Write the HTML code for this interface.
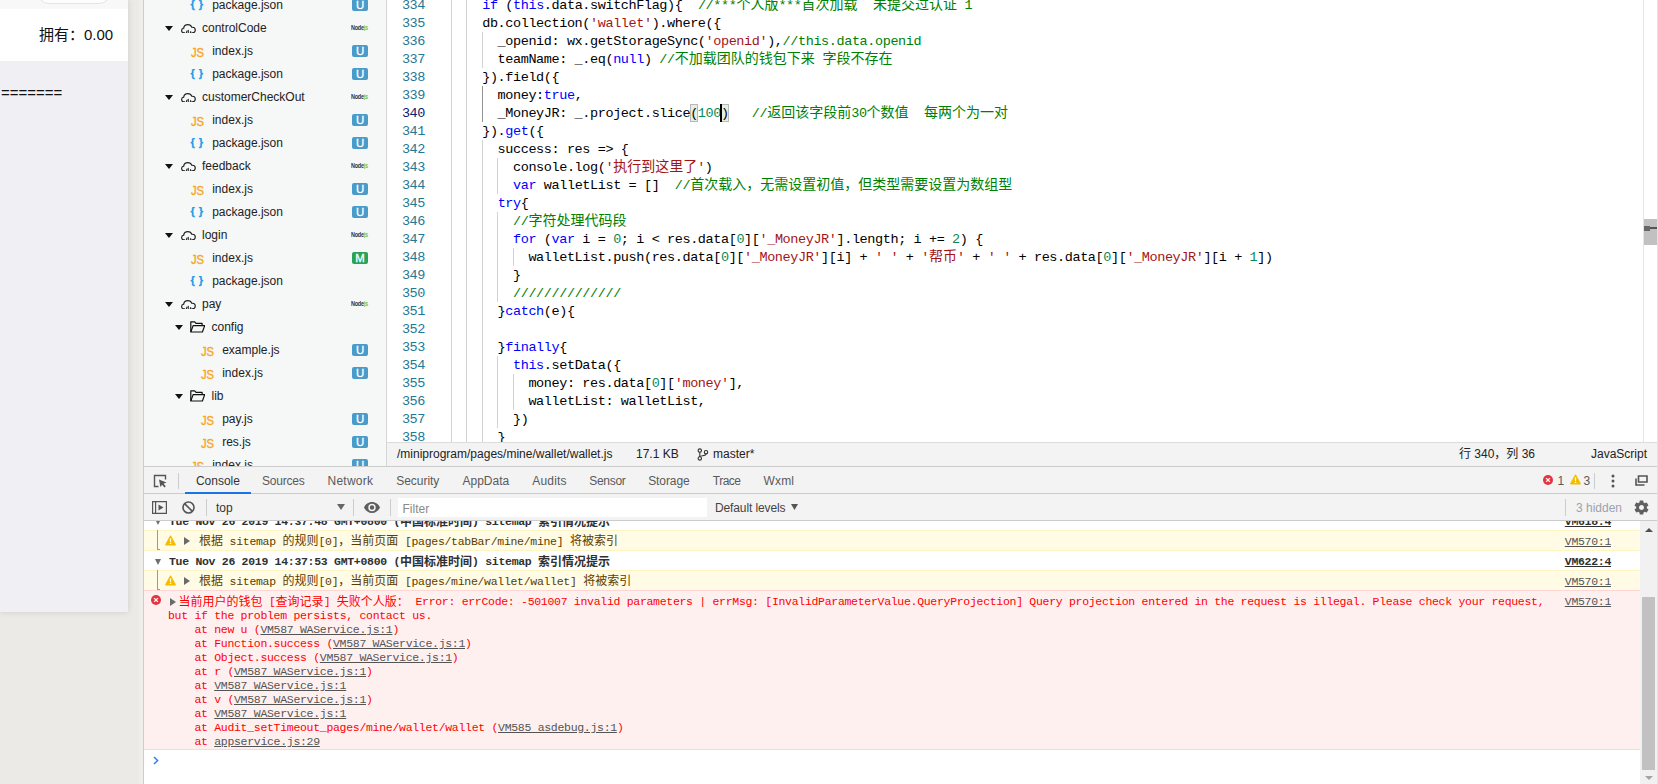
<!DOCTYPE html>
<html lang="zh-CN">
<head>
<meta charset="utf-8">
<title>WeChat DevTools</title>
<style>
*{box-sizing:border-box;margin:0;padding:0}
html,body{width:1658px;height:784px;overflow:hidden}
body{background:#ebeae6;font-family:"Liberation Sans","Noto Sans CJK SC",sans-serif;font-size:12px;color:#222;position:relative}
i{font-style:normal}
u{text-decoration:underline}

/* ---------- simulator ---------- */
#sim{position:absolute;left:0;top:0;width:128px;height:612px;background:#efeff4;box-shadow:0 0 6px rgba(0,0,0,.13);overflow:hidden}
#sim .top{position:absolute;left:0;top:0;width:128px;height:9px;background:#f8f8f8}
#sim .pill{position:absolute;left:37px;top:-20.500px;width:74px;height:24px;border:1px solid #e4e4e4;border-radius:12px;background:#fdfdfd}
#sim .own{position:absolute;left:0;top:9px;width:128px;height:52px;background:#fff}
#sim .own span{position:absolute;left:39px;top:14.500px;font-size:15px;line-height:22px;color:#111;white-space:nowrap}
#sim .eq{position:absolute;left:1px;top:82px;font-size:15px;line-height:22px;color:#111;white-space:nowrap}
#gap{position:absolute;left:139px;top:0;width:5px;height:784px;background:#efeeea;border-right:1px solid #cdcdcf}

#redge{position:absolute;left:1657px;top:0;width:1px;height:784px;background:#e2e2e2;z-index:9}
/* ---------- file tree ---------- */
#tree{position:absolute;left:144px;top:0;width:243px;height:466px;background:#f6f7f7;border-right:1px solid #d6d6d6;overflow:hidden}
.tr{position:absolute;left:0;width:242px;height:23px;line-height:23px;white-space:nowrap}
.tr .ar{position:absolute;top:10px;width:0;height:0;border-left:4px solid transparent;border-right:4px solid transparent;border-top:5px solid #111}
.tr .ic{position:absolute;top:6px}
.tr .nm{position:absolute;top:1px;font-size:12px;color:#222}
.tr .js{position:absolute;top:2.500px;font-size:12.500px;color:#f5a623;letter-spacing:-.2px;transform:scaleX(.9);transform-origin:0 50%;-webkit-text-stroke:.35px #f5a623}
.tr .jn{position:absolute;top:-.5px;font-size:11px;color:#1a9ce6;font-weight:bold;letter-spacing:.5px;-webkit-text-stroke:.25px #1a9ce6;white-space:pre}
.tr .bd{position:absolute;left:208px;top:6px;width:16px;height:12px;border-radius:2px;color:#fff;font-size:11.400px;font-weight:normal;line-height:12.500px;text-align:center;-webkit-text-stroke:.3px #fff}
.bd.u{background:#4a9bc9}
.bd.m{background:#27a45c}
.tr .nd{position:absolute;left:207px;top:0;width:17px;font-size:5.5px;font-weight:bold;color:#333;letter-spacing:-.25px;text-align:left;transform:scaleY(1.35)}
.tr .nd b{color:#6cc24a}

/* ---------- editor ---------- */
#ed{position:absolute;left:387px;top:0;width:1271px;height:442px;background:#fff;overflow:hidden;font-family:"Liberation Mono","Noto Sans CJK SC",monospace;font-size:13.5px;letter-spacing:-.4px}
.ln{position:absolute;left:0;width:38px;height:18px;line-height:18px;text-align:right;color:#237893;white-space:pre}
.ln.cur{color:#0b216f}
.cl{position:absolute;left:49px;height:18px;line-height:18px;white-space:pre;color:#000}
.cl .z{font-family:"Noto Sans CJK SC",sans-serif;font-size:14px;letter-spacing:0;font-weight:400;line-height:0}
.k{color:#0000ff}.s{color:#a31515}.n{color:#09885a}.c{color:#008000}
.ig{position:absolute;width:1px;background:#d3d3d3}
.ig.act{background:#939393}
#cursor{position:absolute;left:333px;top:104px;width:2px;height:18px;background:#000}
.bm{position:absolute;top:104px;width:7.5px;height:18px;border:1px solid #b9b9b9;background:rgba(0,100,0,.1)}
#vsb{position:absolute;left:1256px;top:0;width:14px;height:442px;border-left:1px solid #e4e4e4}
#vsb .th{position:absolute;left:0;top:219px;width:14px;height:26px;background:#c1c1c1}
#vsb .mk{position:absolute;left:0;top:227px;width:14px;height:2px;background:#555}
#vsb .mk2{position:absolute;left:0;top:226px;width:6px;height:5px;background:#666}

/* ---------- status bar ---------- */
#st{position:absolute;left:387px;top:442px;width:1271px;height:24px;background:#f3f3f3;border-top:1px solid #dcdcdc;font-size:12px;line-height:22px;color:#222;white-space:nowrap}
#st span{position:absolute;top:0}

/* ---------- devtools ---------- */
#dt{position:absolute;left:144px;top:466px;width:1514px;height:318px;background:#fff;font-size:12px}
#tbar{position:absolute;left:0;top:0;width:1514px;height:28px;background:#f3f3f3;border-top:1px solid #ccc;border-bottom:1px solid #ccc}
.tb{position:absolute;top:1px;height:26px;line-height:27px;color:#5a5a5a;white-space:nowrap}
.tb.on{color:#333}
#ul{position:absolute;left:41px;top:25px;width:66px;height:2px;background:#1a73e8}
.sep{position:absolute;width:1px;background:#ccc}
#cbar{position:absolute;left:0;top:28px;width:1514px;height:27px;background:#f3f3f3;border-bottom:1px solid #ccc}
#flt{position:absolute;left:254px;top:4px;width:309px;height:19px;background:#fff;color:#8a8a8a;line-height:22px;padding-left:4.500px;letter-spacing:0}
#cbar span{position:absolute;white-space:nowrap}
#cons{position:absolute;left:0;top:55px;width:1496px;height:263px;overflow:hidden;font-family:"Liberation Mono","Noto Serif CJK SC",monospace;font-size:11.5px;letter-spacing:-.3px;line-height:14px}
.zc{font-family:"Noto Sans CJK SC",sans-serif;font-size:12px;line-height:0;letter-spacing:0;font-weight:400;position:relative;top:.5px}
.row{position:absolute;left:0;width:1496px;height:20px;white-space:pre}
.row.wr{height:21px;background:#fffbe5;border-top:1px solid #fff5c2;border-bottom:1px solid #fff5c2;color:#5c3c00}
.row.grp{font-weight:bold;color:#303030}
.row.grp .zc{font-weight:700}
.row .gt{position:absolute;left:25px;top:4px}
.row .wt{position:absolute;left:55px;top:3.500px}
.row .ga{position:absolute;left:11px;top:8px;width:0;height:0;border-left:3.5px solid transparent;border-right:3.5px solid transparent;border-top:6px solid #6e6e6e}
.row .gl{position:absolute;left:13px;top:-1px;width:3px;height:20px;border-left:1px solid #9a9a9a;border-bottom:1px solid #9a9a9a}
.row .wi{position:absolute;left:20.500px;top:3.500px}
.ex{position:absolute;left:40px;top:5.500px;width:0;height:0;border-top:4px solid transparent;border-bottom:4px solid transparent;border-left:6.500px solid #6a6a6a}
.lk{position:absolute;right:29px;top:4px;color:#545454;font-weight:normal}
.lk.b{color:#303030;font-weight:bold}
.er{position:absolute;left:0;width:1496px;height:160px;background:#fff0f0;border-top:1px solid #ffd6d6;border-bottom:1px solid #ffd6d6;color:#ff0000;white-space:pre}
.er .ei{position:absolute;left:7px;top:4px}
.er .e2{left:26px;top:7px}
.er .et{position:absolute;left:24px;top:4px}
.er .e1{padding-left:10.4px}
.er .sl{padding-left:26.4px}
.er u{color:#545454}
.er .lk{top:4px}
.pr{position:absolute;left:9px;top:235px}
#csb{position:absolute;left:1496px;top:55px;width:18px;height:263px;background:#f1f1f1}
#csb .th{position:absolute;left:2px;top:76px;width:13px;height:173px;background:#c1c1c1}
#csb .up{position:absolute;left:4.500px;top:7px;width:0;height:0;border-left:4px solid transparent;border-right:4px solid transparent;border-bottom:4.500px solid #505050}
#csb .dn{position:absolute;left:4.500px;top:255px;width:0;height:0;border-left:4px solid transparent;border-right:4px solid transparent;border-top:4.500px solid #a3a3a3}
</style>
</head>
<body>

<div id="gap"></div>
<div id="redge"></div>

<div id="sim">
  <div class="top"><div class="pill"></div></div>
  <div class="own"><span>拥有：0.00</span></div>
  <div class="eq">=======</div>
</div>

<div id="tree">
<div class="tr" style="top:-7px"><span class="jn" style="left:46.5px">{ }</span><span class="nm" style="left:68.2px">package.json</span><span class="bd u">U</span></div>
<div class="tr" style="top:16px"><i class="ar" style="left:21px"></i><svg class="ic" style="left:37px;top:7.600px" width="15" height="9.700" viewBox="0 0 15 10" preserveAspectRatio="none"><path d="M3.700 9.200H3.300C1.800 9.200.6 8.100.6 6.700c0-1.200.9-2.200 2.100-2.400C2.900 2.300 4.700.6 6.900.6c1.800 0 3.300 1.100 3.900 2.700h.4c1.700 0 3.100 1.300 3.100 2.900 0 1.700-1.400 3-3.100 3h-.5" fill="none" stroke="#222" stroke-width="1.150" stroke-linecap="round"/><path d="M5.300 9.400l.7-2.200M7.300 9.400V6.400M9.200 9.400l.5-1.600" stroke="#222" stroke-width="1.050" fill="none" stroke-linecap="round"/></svg><span class="nm" style="left:58px">controlCode</span><span class="nd">Node<b>js</b></span></div>
<div class="tr" style="top:39px"><span class="js" style="left:46.5px">JS</span><span class="nm" style="left:68.2px">index.js</span><span class="bd u">U</span></div>
<div class="tr" style="top:62px"><span class="jn" style="left:46.5px">{ }</span><span class="nm" style="left:68.2px">package.json</span><span class="bd u">U</span></div>
<div class="tr" style="top:85px"><i class="ar" style="left:21px"></i><svg class="ic" style="left:37px;top:7.600px" width="15" height="9.700" viewBox="0 0 15 10" preserveAspectRatio="none"><path d="M3.700 9.200H3.300C1.800 9.200.6 8.100.6 6.700c0-1.200.9-2.200 2.100-2.400C2.900 2.300 4.700.6 6.900.6c1.800 0 3.300 1.100 3.900 2.700h.4c1.700 0 3.100 1.300 3.100 2.900 0 1.700-1.400 3-3.100 3h-.5" fill="none" stroke="#222" stroke-width="1.150" stroke-linecap="round"/><path d="M5.300 9.400l.7-2.200M7.300 9.400V6.400M9.200 9.400l.5-1.600" stroke="#222" stroke-width="1.050" fill="none" stroke-linecap="round"/></svg><span class="nm" style="left:58px">customerCheckOut</span><span class="nd">Node<b>js</b></span></div>
<div class="tr" style="top:108px"><span class="js" style="left:46.5px">JS</span><span class="nm" style="left:68.2px">index.js</span><span class="bd u">U</span></div>
<div class="tr" style="top:131px"><span class="jn" style="left:46.5px">{ }</span><span class="nm" style="left:68.2px">package.json</span><span class="bd u">U</span></div>
<div class="tr" style="top:154px"><i class="ar" style="left:21px"></i><svg class="ic" style="left:37px;top:7.600px" width="15" height="9.700" viewBox="0 0 15 10" preserveAspectRatio="none"><path d="M3.700 9.200H3.300C1.800 9.200.6 8.100.6 6.700c0-1.200.9-2.200 2.100-2.400C2.900 2.300 4.700.6 6.900.6c1.800 0 3.300 1.100 3.900 2.700h.4c1.700 0 3.100 1.300 3.100 2.900 0 1.700-1.400 3-3.100 3h-.5" fill="none" stroke="#222" stroke-width="1.150" stroke-linecap="round"/><path d="M5.300 9.400l.7-2.200M7.300 9.400V6.400M9.200 9.400l.5-1.600" stroke="#222" stroke-width="1.050" fill="none" stroke-linecap="round"/></svg><span class="nm" style="left:58px">feedback</span><span class="nd">Node<b>js</b></span></div>
<div class="tr" style="top:177px"><span class="js" style="left:46.5px">JS</span><span class="nm" style="left:68.2px">index.js</span><span class="bd u">U</span></div>
<div class="tr" style="top:200px"><span class="jn" style="left:46.5px">{ }</span><span class="nm" style="left:68.2px">package.json</span><span class="bd u">U</span></div>
<div class="tr" style="top:223px"><i class="ar" style="left:21px"></i><svg class="ic" style="left:37px;top:7.600px" width="15" height="9.700" viewBox="0 0 15 10" preserveAspectRatio="none"><path d="M3.700 9.200H3.300C1.800 9.200.6 8.100.6 6.700c0-1.200.9-2.200 2.100-2.400C2.900 2.300 4.700.6 6.900.6c1.800 0 3.300 1.100 3.900 2.700h.4c1.700 0 3.100 1.300 3.100 2.900 0 1.700-1.400 3-3.100 3h-.5" fill="none" stroke="#222" stroke-width="1.150" stroke-linecap="round"/><path d="M5.300 9.400l.7-2.200M7.300 9.400V6.400M9.200 9.400l.5-1.600" stroke="#222" stroke-width="1.050" fill="none" stroke-linecap="round"/></svg><span class="nm" style="left:58px">login</span><span class="nd">Node<b>js</b></span></div>
<div class="tr" style="top:246px"><span class="js" style="left:46.5px">JS</span><span class="nm" style="left:68.2px">index.js</span><span class="bd m">M</span></div>
<div class="tr" style="top:269px"><span class="jn" style="left:46.5px">{ }</span><span class="nm" style="left:68.2px">package.json</span></div>
<div class="tr" style="top:292px"><i class="ar" style="left:21px"></i><svg class="ic" style="left:37px;top:7.600px" width="15" height="9.700" viewBox="0 0 15 10" preserveAspectRatio="none"><path d="M3.700 9.200H3.300C1.800 9.200.6 8.100.6 6.700c0-1.200.9-2.200 2.100-2.400C2.900 2.300 4.700.6 6.900.6c1.800 0 3.300 1.100 3.900 2.700h.4c1.700 0 3.100 1.300 3.100 2.900 0 1.700-1.400 3-3.100 3h-.5" fill="none" stroke="#222" stroke-width="1.150" stroke-linecap="round"/><path d="M5.300 9.400l.7-2.200M7.300 9.400V6.400M9.200 9.400l.5-1.600" stroke="#222" stroke-width="1.050" fill="none" stroke-linecap="round"/></svg><span class="nm" style="left:58px">pay</span><span class="nd">Node<b>js</b></span></div>
<div class="tr" style="top:315px"><i class="ar" style="left:31px"></i><svg class="ic" style="left:45.5px;top:6.100px" width="15.500" height="12" viewBox="0 0 15.500 12"><path d="M.8 11V.8h3.900l1.300 1.500h6.100v2.100" fill="none" stroke="#111" stroke-width="1.200" stroke-linejoin="round"/><path d="M.8 11l2.300-6.400h11.600L12.400 11z" fill="none" stroke="#111" stroke-width="1.200" stroke-linejoin="round"/></svg><span class="nm" style="left:67.5px">config</span></div>
<div class="tr" style="top:338px"><span class="js" style="left:56.5px">JS</span><span class="nm" style="left:78.2px">example.js</span><span class="bd u">U</span></div>
<div class="tr" style="top:361px"><span class="js" style="left:56.5px">JS</span><span class="nm" style="left:78.2px">index.js</span><span class="bd u">U</span></div>
<div class="tr" style="top:384px"><i class="ar" style="left:31px"></i><svg class="ic" style="left:45.5px;top:6.100px" width="15.500" height="12" viewBox="0 0 15.500 12"><path d="M.8 11V.8h3.900l1.300 1.500h6.100v2.100" fill="none" stroke="#111" stroke-width="1.200" stroke-linejoin="round"/><path d="M.8 11l2.300-6.400h11.600L12.400 11z" fill="none" stroke="#111" stroke-width="1.200" stroke-linejoin="round"/></svg><span class="nm" style="left:67.5px">lib</span></div>
<div class="tr" style="top:407px"><span class="js" style="left:56.5px">JS</span><span class="nm" style="left:78.2px">pay.js</span><span class="bd u">U</span></div>
<div class="tr" style="top:430px"><span class="js" style="left:56.5px">JS</span><span class="nm" style="left:78.2px">res.js</span><span class="bd u">U</span></div>
<div class="tr" style="top:453px"><span class="js" style="left:46.5px">JS</span><span class="nm" style="left:68.2px">index.js</span><span class="bd u">U</span></div>
</div>

<div id="ed">
<div class="ln" style="top:-3px">334</div>
<div class="cl" style="top:-3px">      <span class="k">if</span> (<span class="k">this</span>.data.switchFlag){  <span class="c">//***<span class="z">个人版</span>***<span class="z">首次加载</span>  <span class="z">未提交过认证</span> 1</span></div>
<div class="ln" style="top:15px">335</div>
<div class="cl" style="top:15px">      db.collection(<span class="s">'wallet'</span>).where({</div>
<div class="ln" style="top:33px">336</div>
<div class="cl" style="top:33px">        _openid: wx.getStorageSync(<span class="s">'openid'</span>),<span class="c">//this.data.openid</span></div>
<div class="ln" style="top:51px">337</div>
<div class="cl" style="top:51px">        teamName: _.eq(<span class="k">null</span>) <span class="c">//<span class="z">不加载团队的钱包下来</span> <span class="z">字段不存在</span></span></div>
<div class="ln" style="top:69px">338</div>
<div class="cl" style="top:69px">      }).field({</div>
<div class="ln" style="top:87px">339</div>
<div class="cl" style="top:87px">        money:<span class="k">true</span>,</div>
<div class="ln cur" style="top:105px">340</div>
<div class="cl" style="top:105px">        _MoneyJR: _.project.slice(<span class="n">100</span>)   <span class="c">//<span class="z">返回该字段前</span>30<span class="z">个数值</span>  <span class="z">每两个为一对</span></span></div>
<div class="ln" style="top:123px">341</div>
<div class="cl" style="top:123px">      }).<span class="k">get</span>({</div>
<div class="ln" style="top:141px">342</div>
<div class="cl" style="top:141px">        success: res =&gt; {</div>
<div class="ln" style="top:159px">343</div>
<div class="cl" style="top:159px">          console.log(<span class="s">'<span class="z">执行到这里了</span>'</span>)</div>
<div class="ln" style="top:177px">344</div>
<div class="cl" style="top:177px">          <span class="k">var</span> walletList = []  <span class="c">//<span class="z">首次载入，无需设置初值，但类型需要设置为数组型</span></span></div>
<div class="ln" style="top:195px">345</div>
<div class="cl" style="top:195px">        <span class="k">try</span>{</div>
<div class="ln" style="top:213px">346</div>
<div class="cl" style="top:213px">          <span class="c">//<span class="z">字符处理代码段</span></span></div>
<div class="ln" style="top:231px">347</div>
<div class="cl" style="top:231px">          <span class="k">for</span> (<span class="k">var</span> i = <span class="n">0</span>; i &lt; res.data[<span class="n">0</span>][<span class="s">'_MoneyJR'</span>].length; i += <span class="n">2</span>) {</div>
<div class="ln" style="top:249px">348</div>
<div class="cl" style="top:249px">            walletList.push(res.data[<span class="n">0</span>][<span class="s">'_MoneyJR'</span>][i] + <span class="s">' '</span> + <span class="s">'<span class="z">帮币</span>'</span> + <span class="s">' '</span> + res.data[<span class="n">0</span>][<span class="s">'_MoneyJR'</span>][i + <span class="n">1</span>])</div>
<div class="ln" style="top:267px">349</div>
<div class="cl" style="top:267px">          }</div>
<div class="ln" style="top:285px">350</div>
<div class="cl" style="top:285px">          <span class="c">//////////////</span></div>
<div class="ln" style="top:303px">351</div>
<div class="cl" style="top:303px">        }<span class="k">catch</span>(e){</div>
<div class="ln" style="top:321px">352</div>
<div class="ln" style="top:339px">353</div>
<div class="cl" style="top:339px">        }<span class="k">finally</span>{</div>
<div class="ln" style="top:357px">354</div>
<div class="cl" style="top:357px">          <span class="k">this</span>.setData({</div>
<div class="ln" style="top:375px">355</div>
<div class="cl" style="top:375px">            money: res.data[<span class="n">0</span>][<span class="s">'money'</span>],</div>
<div class="ln" style="top:393px">356</div>
<div class="cl" style="top:393px">            walletList: walletList,</div>
<div class="ln" style="top:411px">357</div>
<div class="cl" style="top:411px">          })</div>
<div class="ln" style="top:429px">358</div>
<div class="cl" style="top:429px">        }</div>
<div class="ig" style="left:63.9px;top:-4px;height:450px"></div>
<div class="ig" style="left:79.3px;top:-4px;height:450px"></div>
<div class="ig" style="left:94.7px;top:32px;height:36px"></div>
<div class="ig act" style="left:94.7px;top:86px;height:36px"></div>
<div class="ig" style="left:94.7px;top:140px;height:306px"></div>
<div class="ig" style="left:110.1px;top:158px;height:36px"></div>
<div class="ig" style="left:110.1px;top:212px;height:90px"></div>
<div class="ig" style="left:110.1px;top:356px;height:72px"></div>
<div class="ig" style="left:125.5px;top:248px;height:18px"></div>
<div class="ig" style="left:125.5px;top:374px;height:36px"></div>
<div class="bm" style="left:303px"></div>
<div class="bm" style="left:334px"></div>
<div id="cursor"></div>
<div id="vsb"><div class="th"></div><div class="mk"></div><div class="mk2"></div></div>
</div>

<div id="st">
  <span style="left:10px">/miniprogram/pages/mine/wallet/wallet.js</span>
  <span style="left:249px">17.1 KB</span>
  <svg style="position:absolute;left:310px;top:5px" width="12" height="13" viewBox="0 0 12 13"><g fill="none" stroke="#333" stroke-width="1.100"><circle cx="2.800" cy="2.600" r="1.700"/><circle cx="2.800" cy="10.400" r="1.700"/><circle cx="9" cy="4.200" r="1.700"/><path d="M2.800 4.300v4.400M9 5.900c0 2.300-6.200 1.400-6.200 3"/></g></svg>
  <span style="left:326px">master*</span>
  <span style="left:1072px;font-family:'Liberation Sans','Noto Sans CJK SC',sans-serif">行 340，列 36</span>
  <span style="left:1204px">JavaScript</span>
</div>

<div id="dt">
  <div id="tbar">
    <svg style="position:absolute;left:9px;top:6.500px" width="15" height="15" viewBox="0 0 15 15"><path d="M5.500 12.500H1.500V1.500h11v4" fill="none" stroke="#555" stroke-width="1.400"/><path d="M6 5.500l7.500 3-3 1.200 2.300 2.600-1.400 1.200-2.300-2.700L7.400 13z" fill="#555"/></svg>
    <div class="sep" style="left:34px;top:6px;height:16px"></div>
<span class="tb on" style="left:51.9px;letter-spacing:0px">Console</span><span class="tb" style="left:118.1px;letter-spacing:-0.23px">Sources</span><span class="tb" style="left:183.5px;letter-spacing:0.25px">Network</span><span class="tb" style="left:252.3px;letter-spacing:-0.05px">Security</span><span class="tb" style="left:318.5px;letter-spacing:0px">AppData</span><span class="tb" style="left:388.3px;letter-spacing:0.17px">Audits</span><span class="tb" style="left:445.3px;letter-spacing:-0.3px">Sensor</span><span class="tb" style="left:504.2px;letter-spacing:-0.09px">Storage</span><span class="tb" style="left:568.8px;letter-spacing:-0.5px">Trace</span><span class="tb" style="left:619.5px;letter-spacing:0.17px">Wxml</span>
    <div id="ul"></div>
    <svg style="position:absolute;left:1399px;top:8px" width="10" height="10" viewBox="0 0 10 10"><circle cx="5" cy="5" r="5" fill="#e6343f"/><path d="M3.100 3.100l3.800 3.800M6.900 3.100 3.100 6.900" stroke="#fff" stroke-width="1.300"/></svg>
    <span class="tb" style="left:1413.500px">1</span>
    <svg style="position:absolute;left:1425.500px;top:7px" width="11" height="11" viewBox="0 0 11 11"><path d="M5.500 1.300 10 9.700H1z" fill="#f4bd00" stroke="#f4bd00" stroke-width="1.600" stroke-linejoin="round"/><path d="M4.800 3.600h1.400l-.2 3.400H5zM4.800 7.800h1.400v1.300H4.800z" fill="#fff"/></svg>
    <span class="tb" style="left:1439.500px">3</span>
    <div class="sep" style="left:1450px;top:6px;height:16px"></div>
    <svg style="position:absolute;left:1467px;top:7px" width="4" height="14" viewBox="0 0 4 14"><circle cx="2" cy="2" r="1.500" fill="#555"/><circle cx="2" cy="7" r="1.500" fill="#555"/><circle cx="2" cy="12" r="1.500" fill="#555"/></svg>
    <svg style="position:absolute;left:1491px;top:8px" width="13" height="11" viewBox="0 0 13 11"><path d="M3.500 1h8.500v6H3.500z" fill="none" stroke="#555" stroke-width="1.600"/><path d="M1 3.500V10h8.500" fill="none" stroke="#555" stroke-width="1.600"/></svg>
  </div>
  <div id="cbar">
    <svg style="position:absolute;left:8px;top:7px" width="15" height="13" viewBox="0 0 15 13"><path d="M.6.600h13.800v11.800H.6zM3.600.6v11.800" fill="none" stroke="#555" stroke-width="1.200"/><path d="M6.500 3.500l5 3-5 3z" fill="#555"/></svg>
    <svg style="position:absolute;left:38px;top:7px" width="13" height="13" viewBox="0 0 13 13"><circle cx="6.500" cy="6.500" r="5.500" fill="none" stroke="#555" stroke-width="1.600"/><path d="M2.600 2.600l7.800 7.800" stroke="#555" stroke-width="1.600"/></svg>
    <div class="sep" style="left:62px;top:5px;height:17px"></div>
    <span style="left:72px;top:1px;line-height:27px;color:#333">top</span>
    <svg style="position:absolute;left:193px;top:10px" width="8" height="6" viewBox="0 0 8 6"><path d="M0 0h8L4 6z" fill="#666"/></svg>
    <div class="sep" style="left:209px;top:5px;height:17px"></div>
    <svg style="position:absolute;left:220px;top:8px" width="16" height="11" viewBox="0 0 16 11"><path d="M8 0C4.400 0 1.400 2.300 0 5.500 1.400 8.700 4.400 11 8 11s6.600-2.300 8-5.500C14.600 2.300 11.600 0 8 0zm0 9.200A3.700 3.700 0 118 1.800a3.700 3.700 0 010 7.400zm0-5.900a2.200 2.200 0 100 4.400 2.200 2.200 0 000-4.400z" fill="#5f5f5f"/></svg>
    <div class="sep" style="left:246px;top:5px;height:17px"></div>
    <div id="flt">Filter</div>
    <span style="left:571px;top:1px;line-height:26px;color:#444;letter-spacing:-.12px">Default levels</span>
    <svg style="position:absolute;left:647px;top:10px" width="7" height="6" viewBox="0 0 7 6"><path d="M0 0h7L3.500 6z" fill="#555"/></svg>
    <div class="sep" style="left:1421px;top:5px;height:17px"></div>
    <span style="left:1432px;top:1px;line-height:27px;color:#9ea2ad">3 hidden</span>
    <svg style="position:absolute;left:1488.800px;top:4.900px" width="17" height="17" viewBox="0 0 24 24"><path fill="#5f5f5f" d="M19.430 12.980c.040-.320.070-.640.070-.980s-.030-.660-.070-.980l2.110-1.650c.190-.150.240-.420.120-.640l-2-3.460c-.120-.220-.390-.300-.610-.220l-2.490 1c-.520-.400-1.080-.730-1.690-.980l-.380-2.650C14.460 2.180 14.250 2 14 2h-4c-.250 0-.460.180-.490.420l-.380 2.650c-.610.250-1.170.590-1.690.980l-2.490-1c-.230-.090-.490 0-.610.220l-2 3.460c-.130.220-.070.490.120.640l2.110 1.650c-.040.320-.070.650-.070.980s.030.660.070.980l-2.110 1.650c-.190.150-.240.420-.120.640l2 3.460c.120.220.390.300.610.220l2.490-1c.520.400 1.080.730 1.690.980l.380 2.650c.030.240.240.420.490.420h4c.250 0 .460-.180.490-.420l.380-2.650c.610-.250 1.170-.590 1.690-.980l2.490 1c.230.090.490 0 .610-.220l2-3.460c.120-.220.070-.490-.120-.640l-2.110-1.650zM12 15.500c-1.930 0-3.500-1.570-3.500-3.500s1.570-3.500 3.500-3.500 3.500 1.570 3.500 3.500-1.570 3.500-3.500 3.500z"/></svg>
  </div>
  <div id="cons">

<div class="row grp" style="top:-10px"><i class="ga"></i><span class="gt">Tue Nov 26 2019 14:37:48 GMT+0800 (<span class="zc">中国标准时间</span>) sitemap <span class="zc">索引情况提示</span></span><u class="lk b">VM618:4</u></div>
<div class="row wr" style="top:9px"><i class="gl"></i><svg class="wi" width="11" height="11" viewBox="0 0 11 11"><path d="M5.500 1.300 10 9.700H1z" fill="#f4bd00" stroke="#f4bd00" stroke-width="1.600" stroke-linejoin="round"/><path d="M4.800 3.600h1.400l-.2 3.400H5zM4.800 7.800h1.400v1.300H4.800z" fill="#fff"/></svg><i class="ex"></i><span class="wt"><span class="zc">根据</span> sitemap <span class="zc">的规则</span>[0]<span class="zc">，当前页面</span> [pages/tabBar/mine/mine] <span class="zc">将被索引</span></span><u class="lk">VM570:1</u></div>
<div class="row grp" style="top:30px"><i class="ga"></i><span class="gt">Tue Nov 26 2019 14:37:53 GMT+0800 (<span class="zc">中国标准时间</span>) sitemap <span class="zc">索引情况提示</span></span><u class="lk b">VM622:4</u></div>
<div class="row wr" style="top:49px"><i class="gl"></i><svg class="wi" width="11" height="11" viewBox="0 0 11 11"><path d="M5.500 1.300 10 9.700H1z" fill="#f4bd00" stroke="#f4bd00" stroke-width="1.600" stroke-linejoin="round"/><path d="M4.800 3.600h1.400l-.2 3.400H5zM4.800 7.800h1.400v1.300H4.800z" fill="#fff"/></svg><i class="ex"></i><span class="wt"><span class="zc">根据</span> sitemap <span class="zc">的规则</span>[0]<span class="zc">，当前页面</span> [pages/mine/wallet/wallet] <span class="zc">将被索引</span></span><u class="lk">VM570:1</u></div>
<div class="er" style="top:69px"><svg class="ei" width="10" height="10" viewBox="0 0 10 10"><circle cx="5" cy="5" r="5" fill="#e6343f"/><path d="M3.100 3.100l3.800 3.800M6.900 3.100 3.100 6.900" stroke="#fff" stroke-width="1.300"/></svg><i class="ex e2"></i><div class="et"><div class="e1"><span class="zc">当前用户的钱包</span> [<span class="zc">查询记录</span>] <span class="zc">失败个人版：</span> Error: errCode: -501007 invalid parameters | errMsg: [InvalidParameterValue.QueryProjection] Query projection entered in the request is illegal. Please check your request,</div><div class="e0">but if the problem persists, contact us.</div><div class="sl">at new u (<u>VM587 WAService.js:1</u>)</div><div class="sl">at Function.success (<u>VM587 WAService.js:1</u>)</div><div class="sl">at Object.success (<u>VM587 WAService.js:1</u>)</div><div class="sl">at r (<u>VM587 WAService.js:1</u>)</div><div class="sl">at <u>VM587 WAService.js:1</u></div><div class="sl">at v (<u>VM587 WAService.js:1</u>)</div><div class="sl">at <u>VM587 WAService.js:1</u></div><div class="sl">at Audit_setTimeout_pages/mine/wallet/wallet (<u>VM585 asdebug.js:1</u>)</div><div class="sl">at <u>appservice.js:29</u></div></div><u class="lk">VM570:1</u></div>
<svg class="pr" width="6" height="9" viewBox="0 0 6 9"><path d="M1 1l3.600 3.500L1 8" fill="none" stroke="#367cf1" stroke-width="1.500"/></svg>

  </div>
  <div id="csb"><div class="up"></div><div class="th"></div><div class="dn"></div></div>
</div>

</body>
</html>
